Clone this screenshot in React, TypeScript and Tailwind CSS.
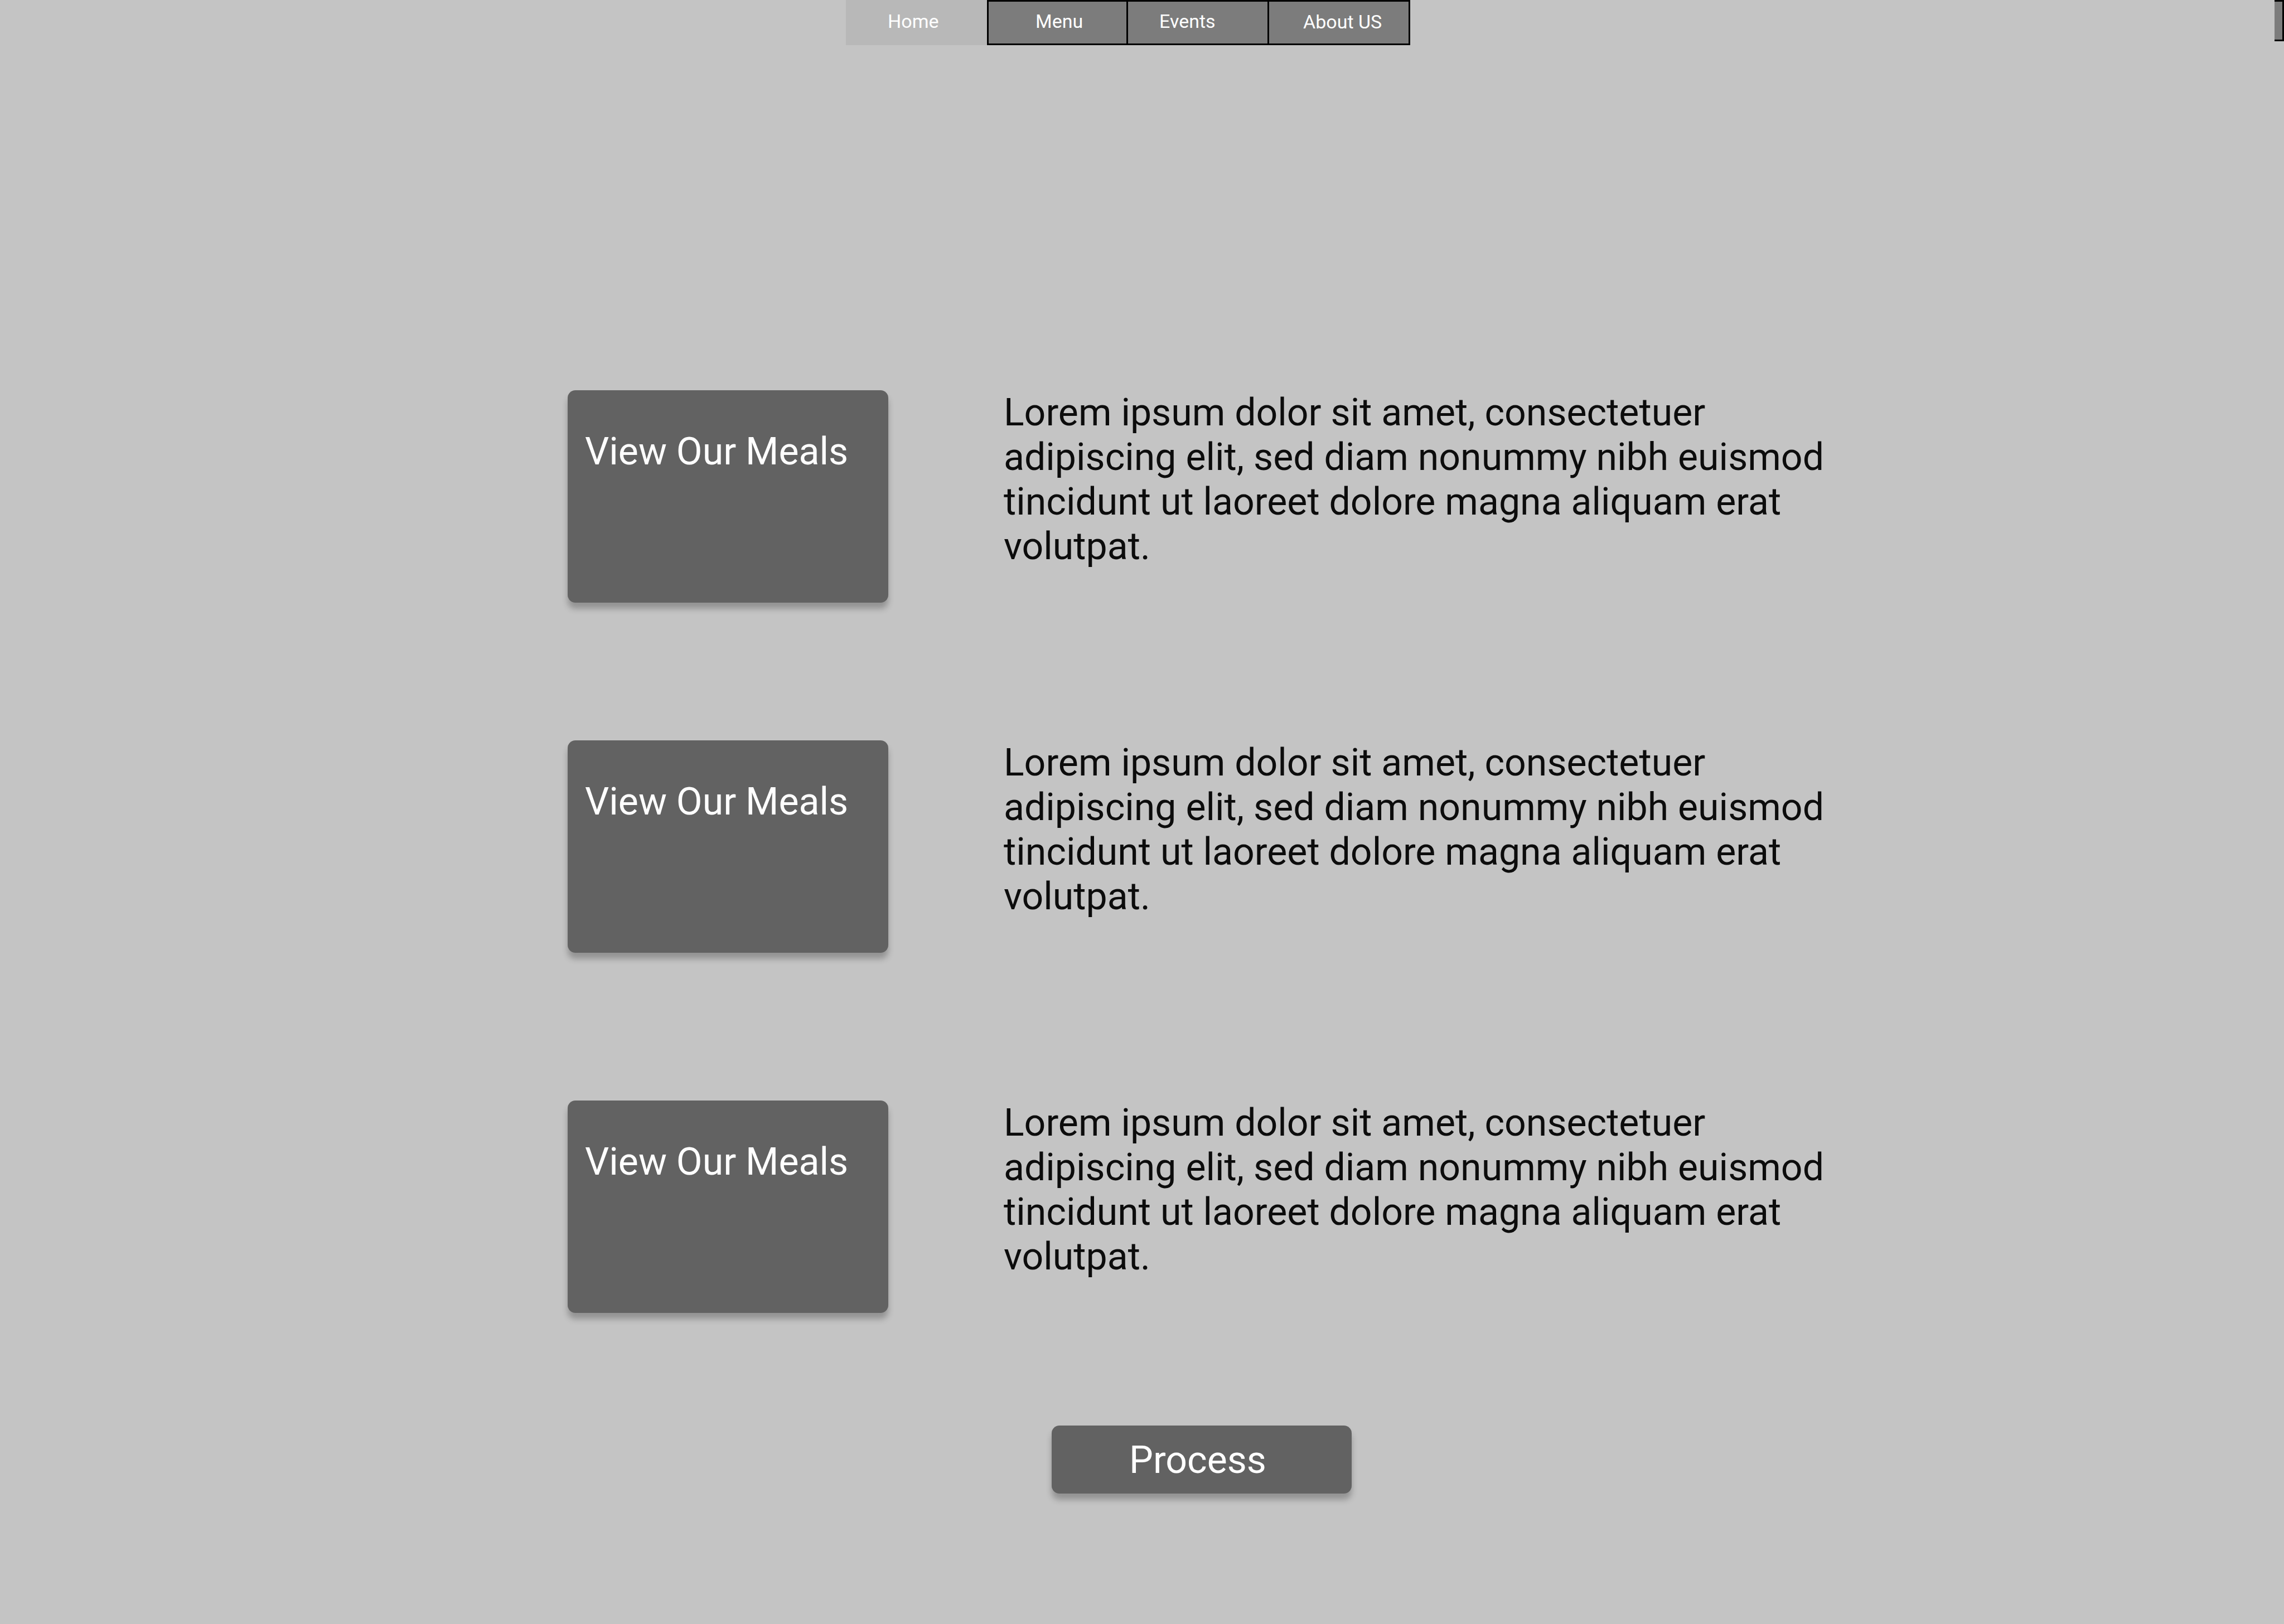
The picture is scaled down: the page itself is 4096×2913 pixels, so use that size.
const blurb =
  "Lorem ipsum dolor sit amet, consectetuer adipiscing elit, sed diam nonummy nibh euismod tincidunt ut laoreet dolore magna aliquam erat volutpat.";

const sections = [
  { id: "meals-1", spacing: "mt-[619px]" },
  { id: "meals-2", spacing: "mt-[247px]" },
  { id: "meals-3", spacing: "mt-[265px]" },
];

function Header() {
  return (
    <header className="grid h-[81px] grid-cols-[1517fr_1012fr_1550fr_17fr] items-start">
      <nav className="col-start-2 grid h-full grid-cols-4 text-[34px] leading-[40px] text-white">
        <a href="#home" className="bg-[#b8b8b8] pt-[18px] pl-[75px]">
          Home
        </a>
        <a href="#menu" className="border-3 border-black bg-[#7c7c7c] pt-[15px] pl-[84px]">
          Menu
        </a>
        <a href="#events" className="border-y-3 border-r-3 border-black bg-[#7c7c7c] pt-[15px] pl-[56px]">
          Events
        </a>
        <a href="#about" className="border-y-3 border-r-3 border-black bg-[#7c7c7c] pt-[16px] pl-[61px]">
          About US
        </a>
      </nav>
      <div className="col-start-4 h-[74px] border-y-3 border-r-3 border-black bg-[#7c7c7c]" />
    </header>
  );
}

export default function App() {
  return (
    <div className="min-h-screen bg-[#c4c4c4] font-['Roboto',sans-serif]">
      <Header />
      <main className="text-[68px] leading-[80px]">
        {sections.map((s) => (
          <section key={s.id} className={`grid grid-cols-[1018fr_575fr_207fr_1500fr_796fr] ${s.spacing}`}>
            <button
              type="button"
              className="col-start-2 flex h-[381px] items-start rounded-[14px] bg-[#626262] pt-[70px] pl-[31px] text-left text-white shadow-[0_11px_11px_rgba(0,0,0,0.25)]"
            >
              View Our Meals
            </button>
            <p className="col-start-4 text-[#0c0c0c]">{blurb}</p>
          </section>
        ))}
        <div className="mt-[202px] grid grid-cols-[1886fr_538fr_1672fr] pb-[200px]">
          <button
            type="button"
            className="col-start-2 h-[122px] rounded-[14px] bg-[#626262] pt-[2px] pl-[139px] text-left text-white shadow-[0_11px_11px_rgba(0,0,0,0.25)]"
          >
            Process
          </button>
        </div>
      </main>
    </div>
  );
}
